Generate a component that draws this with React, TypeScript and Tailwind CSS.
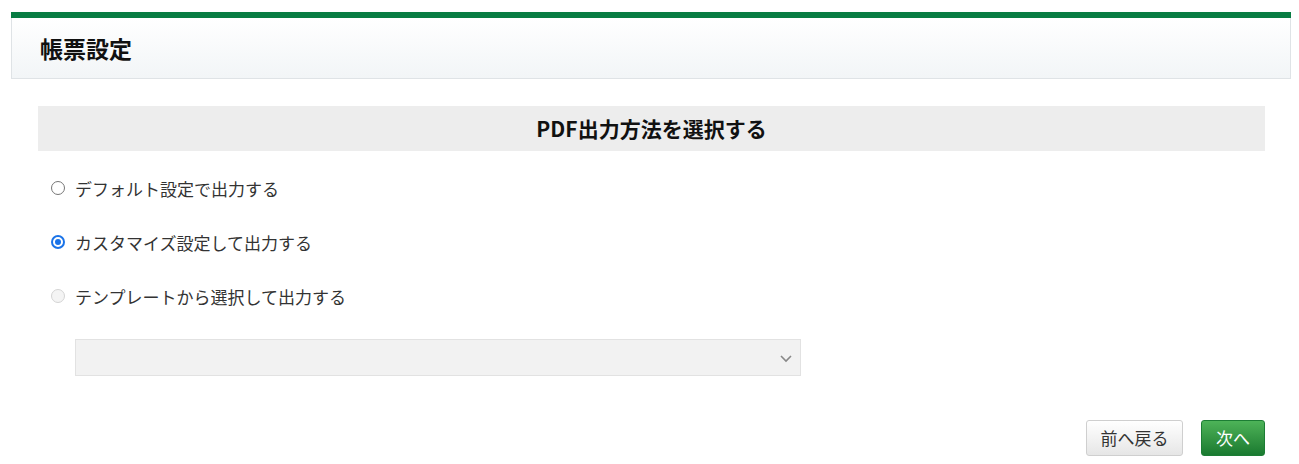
import React from "react";

const font = { fontFamily: '"Noto Sans CJK JP", "Noto Sans", sans-serif' };

function Radio({ checked, disabled }: { checked?: boolean; disabled?: boolean }) {
  if (checked) {
    return (
      <span className="w-[14px] h-[14px] rounded-full bg-[#1a73e8] flex items-center justify-center shrink-0">
        <span className="w-[10px] h-[10px] rounded-full border-[2px] border-white bg-[#1a73e8]" />
      </span>
    );
  }
  return (
    <span
      className={
        "w-[14px] h-[14px] rounded-full border-[1.5px] shrink-0 " +
        (disabled ? "border-[#d4d4d4] bg-[#f4f4f4]" : "border-[#767676] bg-white")
      }
    />
  );
}

export default function App() {
  const options = [
    { label: "デフォルト設定で出力する" },
    { label: "カスタマイズ設定して出力する", checked: true },
    { label: "テンプレートから選択して出力する", disabled: true },
  ];
  return (
    <div className="w-[1299px] h-[464px] bg-white pt-[12px] pl-[11px] pr-[8px] text-[#222]" style={font}>
      <div className="border-t-[6px] border-[#087d43]">
        <div className="h-[61px] border-x border-b border-[#dfe3e6] bg-gradient-to-b from-white to-[#f2f5f7] flex items-center pl-[28px]">
          <h1 className="text-[23px] font-bold text-[#111] leading-none">帳票設定</h1>
        </div>
      </div>
      <div className="pl-[27px] pr-[26px] pt-[27px]">
        <div className="h-[45px] bg-[#ededed] flex items-center justify-center">
          <h2 className="text-[21px] font-bold text-[#111] leading-none">PDF出力方法を選択する</h2>
        </div>
        <div className="pt-[27px] pl-[13px] flex flex-col gap-[34px]">
          {options.map((o) => (
            <label key={o.label} className="flex items-center gap-[10px] h-[20px]">
              <Radio checked={o.checked} disabled={o.disabled} />
              <span className="text-[17px] leading-none text-[#333]">{o.label}</span>
            </label>
          ))}
        </div>
        <div className="pl-[37px] pt-[33px]">
          <div className="w-[726px] h-[37px] bg-[#f2f2f2] border border-[#e2e2e2] flex items-center justify-end pr-[7px]">
            <svg width="14" height="14" viewBox="0 0 14 14" fill="none">
              <path d="M2 5l5 5 5-5" stroke="#888" strokeWidth="1.6" />
            </svg>
          </div>
        </div>
        <div className="flex justify-end gap-[18px] pt-[44px]">
          <button className="w-[97px] h-[36px] rounded-[3px] border border-[#cfcfcf] bg-gradient-to-b from-white to-[#e6e6e6] text-[17px] text-[#333] flex items-center justify-center">
            前へ戻る
          </button>
          <button className="w-[64px] h-[36px] rounded-[3px] border border-[#1c7d34] bg-gradient-to-b from-[#4db358] to-[#197a30] text-[17px] text-white flex items-center justify-center">
            次へ
          </button>
        </div>
      </div>
    </div>
  );
}
